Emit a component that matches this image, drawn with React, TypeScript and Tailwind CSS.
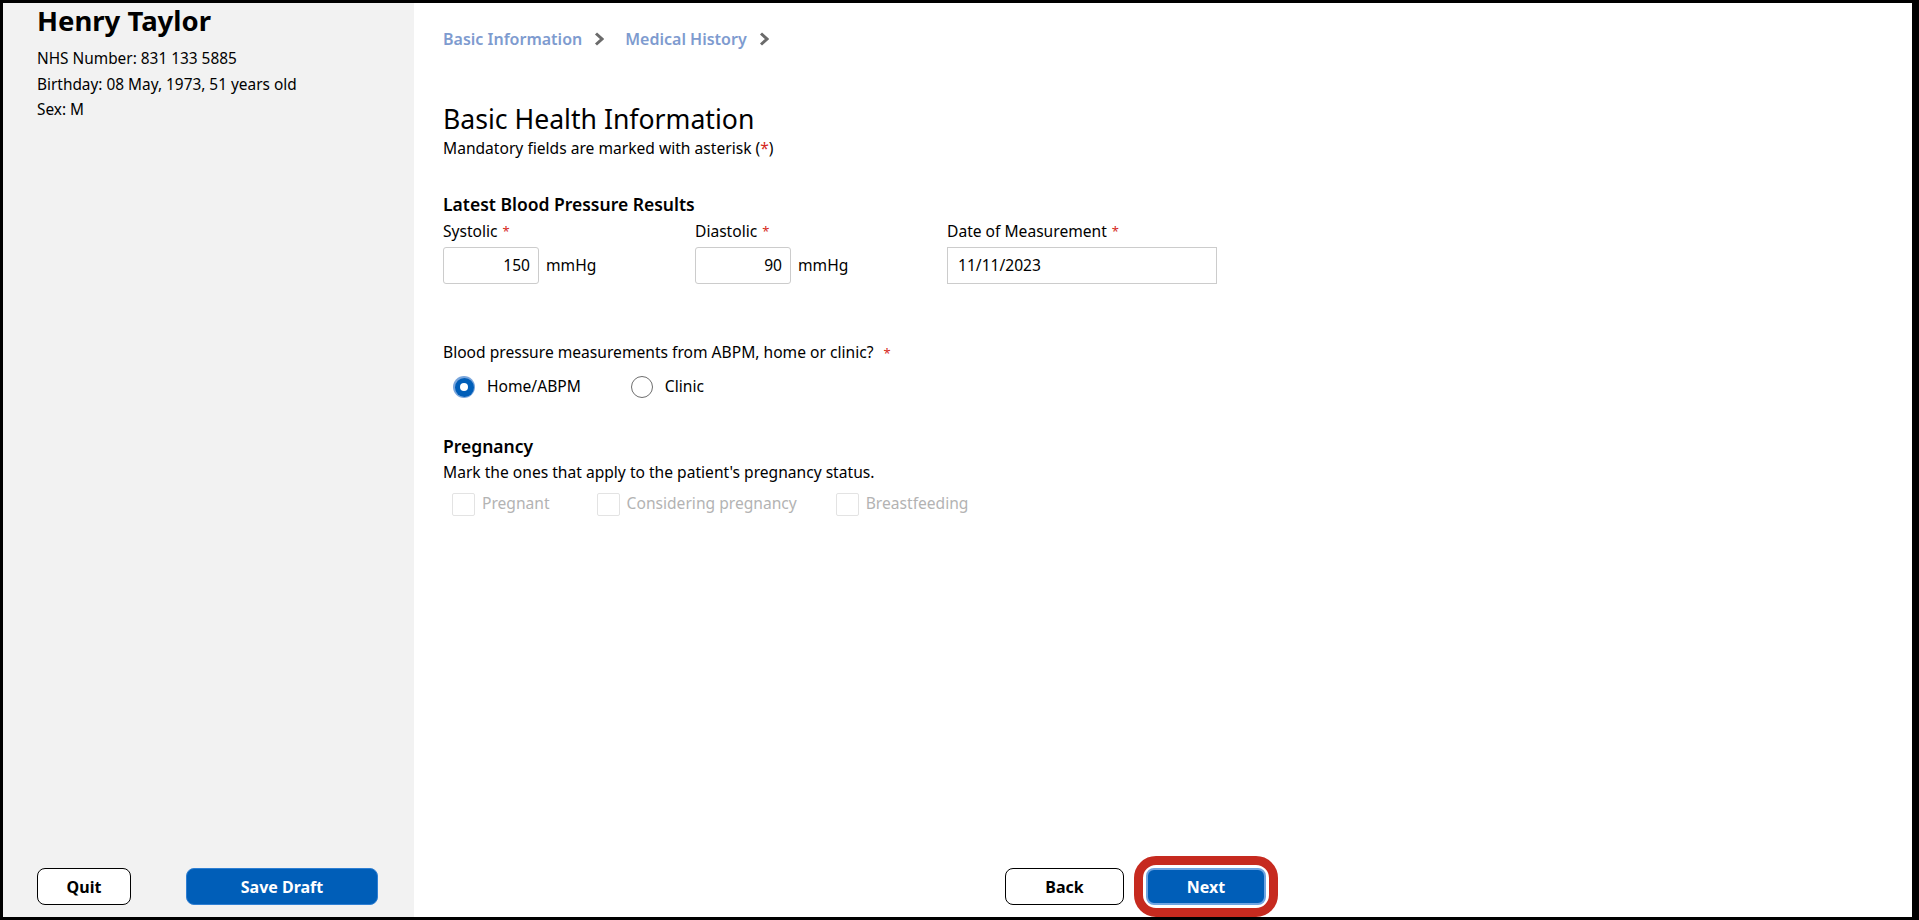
import React, { useState } from 'react';

const font = { fontFamily: '"Noto Sans", "Open Sans", Arial, sans-serif' };

const Star = () => <span className="text-[#d5281b] text-[13px] align-top ml-[5px]">*</span>;

const Chevron = () => (
  <svg width="10" height="14" viewBox="0 0 10 14" className="ml-[12px] mr-[21px]">
    <path d="M2 1.5 L8 7 L2 12.5" fill="none" stroke="#6b6b6b" strokeWidth="3" strokeLinejoin="miter" />
  </svg>
);

const NumberField: React.FC<{ label: string; value: string }> = ({ label, value }) => (
  <div className="flex flex-col w-[252px]">
    <div className="leading-[22px] h-[22px]">
      {label}
      <Star />
    </div>
    <div className="flex items-center mt-[5px]">
      <div className="w-[96px] h-[37px] border border-[#cccccc] rounded-[3px] flex items-center justify-end pr-[8px] bg-white">
        {value}
      </div>
      <span className="ml-[7px]">mmHg</span>
    </div>
  </div>
);

const Radio: React.FC<{ label: string; checked: boolean; onClick: () => void }> = ({ label, checked, onClick }) => (
  <button onClick={onClick} className="flex items-center gap-[12px] h-[24px]">
    {checked ? (
      <span className="w-[22px] h-[22px] rounded-full bg-[#7aa6dc] flex items-center justify-center">
        <span className="w-[19px] h-[19px] rounded-full bg-[#005eb8] flex items-center justify-center">
          <span className="w-[8px] h-[8px] rounded-full bg-white" />
        </span>
      </span>
    ) : (
      <span className="w-[22px] h-[22px] rounded-full border border-[#6e6e6e] bg-white" />
    )}
    <span>{label}</span>
  </button>
);

const Check: React.FC<{ label: string }> = ({ label }) => (
  <div className="flex items-center gap-[7px] h-[24px] text-[#b3b3b3]">
    <span className="w-[23px] h-[23px] border border-[#e3e3e3] rounded-[2px] bg-white" />
    <span>{label}</span>
  </div>
);

export default function App() {
  const [source, setSource] = useState('home');

  return (
    <div
      style={font}
      className="w-[1919px] h-[920px] flex border-black border-t-[3px] border-l-[3px] border-b-[3px] border-r-[7px] text-[15.6px] text-black overflow-hidden"
    >
      {/* Patient sidebar */}
      <aside className="w-[411px] bg-[#f2f2f2] flex flex-col justify-between pl-[34px] pt-[1px] pb-[12px]">
        <div>
          <h1 className="text-[27.5px] font-bold leading-[34px]">Henry Taylor</h1>
          <div className="mt-[8px] leading-[25.5px] text-[15.4px]">
            <div>NHS Number: 831 133 5885</div>
            <div>Birthday: 08 May, 1973, 51 years old</div>
            <div>Sex: M</div>
          </div>
        </div>
        <div className="flex items-center gap-[55px]">
          <button className="w-[94px] h-[37px] bg-white border border-black rounded-[8px] font-bold text-[16px]">Quit</button>
          <button className="w-[192px] h-[37px] bg-[#005eb8] border border-[#2f7fd3] rounded-[8px] font-bold text-white text-[16px]">
            Save Draft
          </button>
        </div>
      </aside>

      {/* Form */}
      <main className="flex-1 bg-white flex flex-col justify-between pl-[29px]">
        <div>
          <nav className="mt-[24px] h-[24px] flex items-center font-semibold text-[16px] text-[#7e9bcf]">
            <span>Basic Information</span>
            <Chevron />
            <span>Medical History</span>
            <Chevron />
          </nav>

          <h2 className="mt-[50px] text-[26.6px] leading-[36px]">Basic Health Information</h2>
          <p className="leading-[22px]">
            Mandatory fields are marked with asterisk (<span className="text-[#d5281b]">*</span>)
          </p>

          <h3 className="mt-[33px] font-semibold text-[17.5px] leading-[24px]">Latest Blood Pressure Results</h3>
          <div className="flex mt-[4px]">
            <NumberField label="Systolic" value="150" />
            <NumberField label="Diastolic" value="90" />
            <div className="flex flex-col">
              <div className="leading-[22px] h-[22px]">
                Date of Measurement
                <Star />
              </div>
              <div className="mt-[5px] w-[270px] h-[37px] border border-[#cccccc] flex items-center pl-[10px]">11/11/2023</div>
            </div>
          </div>

          <div className="mt-[57px] leading-[22px]">
            Blood pressure measurements from ABPM, home or clinic? <span className="text-[#d5281b] text-[13px] ml-[6px]">*</span>
          </div>
          <div className="mt-[11px] flex items-center gap-[50px] pl-[10px]">
            <Radio label="Home/ABPM" checked={source === 'home'} onClick={() => setSource('home')} />
            <Radio label="Clinic" checked={source === 'clinic'} onClick={() => setSource('clinic')} />
          </div>

          <h3 className="mt-[35px] font-semibold text-[17.5px] leading-[24px]">Pregnancy</h3>
          <p className="mt-[3px] leading-[22px]">Mark the ones that apply to the patient's pregnancy status.</p>
          <div className="mt-[9px] flex items-center gap-[47px] pl-[9px]">
            <Check label="Pregnant" />
            <Check label="Considering pregnancy" />
            <div className="-ml-[8px]">
              <Check label="Breastfeeding" />
            </div>
          </div>
        </div>

        <div className="flex items-center pl-[562px]">
          <button className="w-[119px] h-[37px] bg-white border border-black rounded-[8px] font-bold text-[16px]">Back</button>
          <div className="ml-[10px] border-[9px] border-[#c62a1f] rounded-[22px] p-[3px]">
            <button className="w-[120px] h-[37px] bg-[#005eb8] border-2 border-[#6ea4e2] rounded-[8px] font-bold text-white text-[16px]">
              Next
            </button>
          </div>
        </div>
      </main>
    </div>
  );
}
